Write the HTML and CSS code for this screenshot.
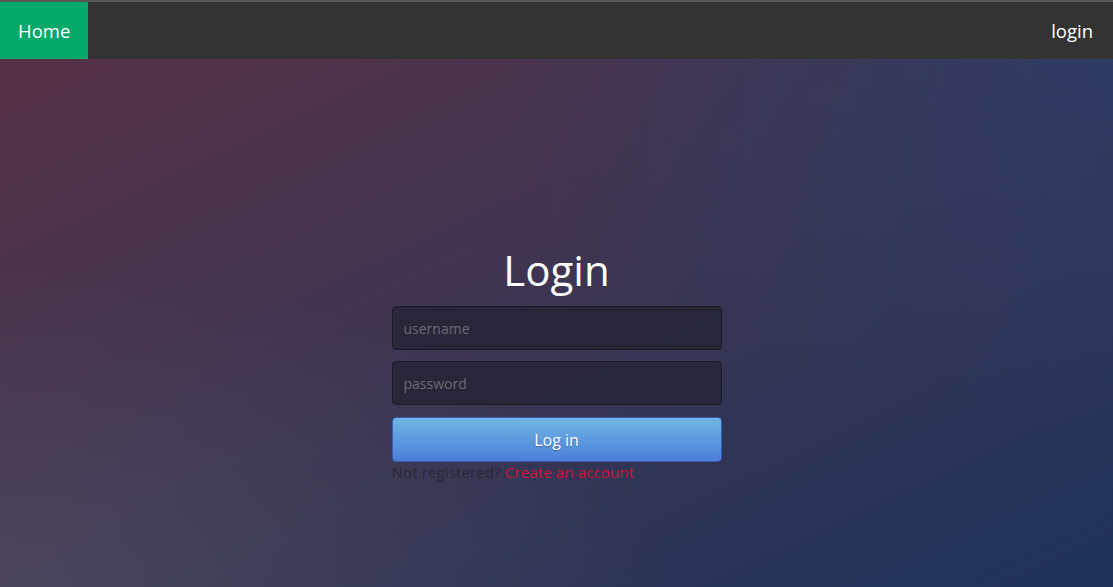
FILE: index.html
```html
<!DOCTYPE html>
<html lang="en">
<head>
<meta charset="utf-8">
<title>Login</title>
<link rel="stylesheet" href="styles.css">
</head>
<body>
<nav class="navbar">
  <a class="nav-home" href="#">Home</a>
  <a class="nav-login" href="#">login</a>
</nav>
<main class="page">
  <form class="login-form">
    <h1 class="title">Login</h1>
    <input class="field" type="text" placeholder="username">
    <input class="field" type="password" placeholder="password">
    <button class="btn" type="button">Log in</button>
    <p class="register"><span class="muted">Not registered?</span> <a class="create" href="#">Create an account</a></p>
  </form>
</main>
</body>
</html>
```

FILE: styles.css
```css
html, body {
  margin: 0;
  padding: 0;
  height: 100%;
}
body {
  font-family: "Open Sans", "Liberation Sans", sans-serif;
  background: #333;
  display: flex;
  flex-direction: column;
  overflow: hidden;
}
.navbar {
  height: 57px;
  border-top: 2px solid #575757;
  background: #333333;
  display: flex;
  align-items: stretch;
  justify-content: space-between;
  flex: none;
}
.nav-home {
  background: #05a86b;
  color: #fff;
  text-decoration: none;
  font-size: 18.5px;
  padding: 0 18px 1px;
  display: flex;
  align-items: center;
}
.nav-login {
  color: #fff;
  text-decoration: none;
  font-size: 18.5px;
  padding: 0 20px 1px;
  display: flex;
  align-items: center;
}
.page {
  flex: 1;
  background:
    radial-gradient(ellipse 60% 60% at 0% 100%, rgba(92, 88, 102, 0.45), rgba(92, 88, 102, 0) 100%),
    radial-gradient(ellipse 55% 70% at 100% 0%, rgba(38, 62, 108, 0.6), rgba(38, 62, 108, 0) 100%),
    linear-gradient(to bottom right, #573246 0%, #3d3552 46%, #1d3359 100%);
  display: flex;
  justify-content: center;
}
.login-form {
  width: 330px;
  margin-top: 187px;
  display: flex;
  flex-direction: column;
  gap: 11px;
}
.title {
  margin: 0 0 1px;
  font-size: 42px;
  line-height: 48px;
  font-weight: 400;
  color: #fff;
  text-align: center;
}
.field {
  box-sizing: border-box;
  height: 44px;
  margin: 0;
  padding: 0 11px;
  border: 1px solid #1c1b28;
  border-radius: 4px;
  background: rgba(36, 34, 50, 0.75);
  color: #ddd;
  font-family: "Open Sans", "Liberation Sans", sans-serif;
  font-size: 14px;
  outline: none;
}
.field::placeholder {
  color: #6b6a74;
}
.btn {
  box-sizing: border-box;
  height: 45px;
  margin: 1px 0 0;
  border: 1px solid #3a5cae;
  border-radius: 4px;
  background: linear-gradient(to bottom, #6fb6e2, #4b7ddb);
  color: #fff;
  font-family: "Open Sans", "Liberation Sans", sans-serif;
  font-size: 16px;
  text-shadow: 0 1px 1px rgba(0, 0, 0, 0.25);
  cursor: pointer;
}
.register {
  margin: -11px 0 0;
  font-size: 15.3px;
  line-height: 20px;
}
.muted {
  color: #2a2837;
}
.create {
  color: #d0103a;
  text-decoration: none;
}
```
